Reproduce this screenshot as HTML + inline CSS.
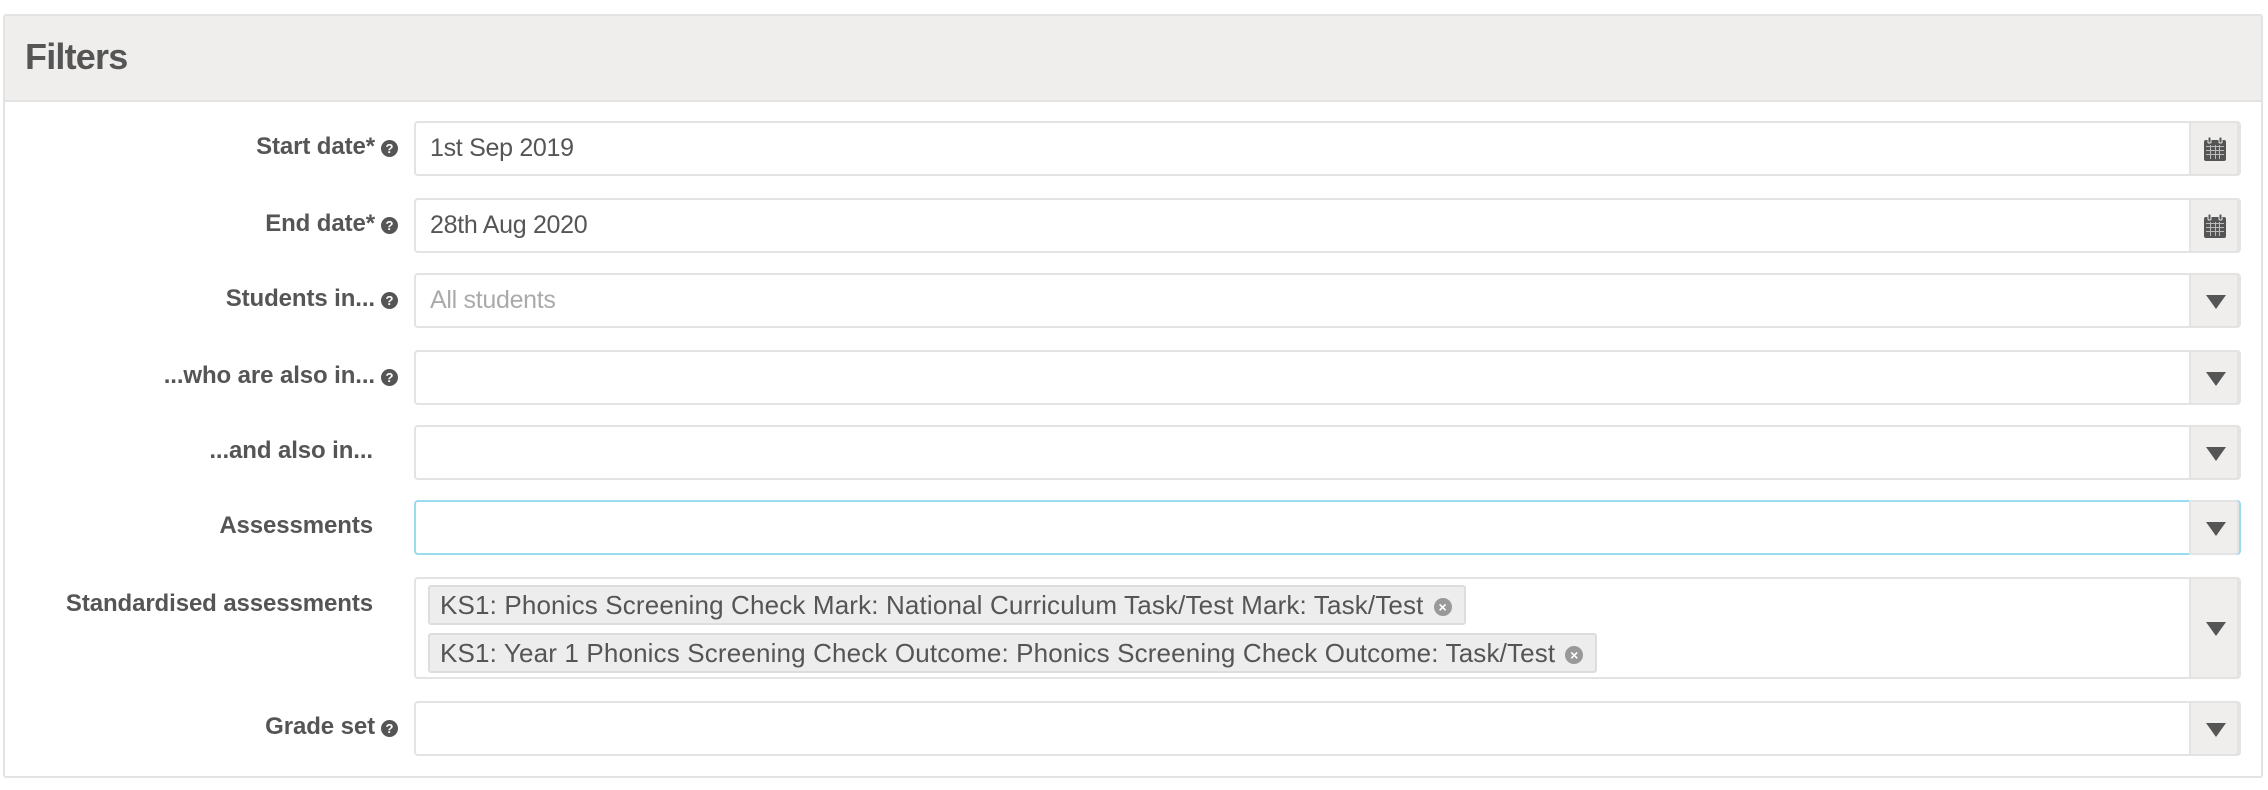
<!DOCTYPE html>
<html><head><meta charset="utf-8"><style>
*{box-sizing:border-box;margin:0;padding:0}
body{width:2268px;height:790px;background:#fff;font-family:"Liberation Sans",sans-serif;color:#555;position:relative;overflow:hidden}
.panel{position:absolute;left:3px;top:14px;width:2260px;height:764px;border:2px solid #e3e3e3;border-radius:3px}
.head{position:absolute;left:0;top:0;right:0;height:86px;background:#efeeed;border-bottom:2px solid #e3e3e3}
.head h1{position:absolute;left:20px;top:20px;font-size:36px;font-weight:bold;color:#555;letter-spacing:-0.8px}
.lab{position:absolute;right:1895px;font-size:24px;font-weight:bold;color:#555;text-align:right;white-space:nowrap;letter-spacing:-0.1px}
.q{display:inline-block;width:17px;height:17px;border-radius:50%;background:#555;color:#fff;font-size:13px;line-height:17px;text-align:center;margin-left:6px;vertical-align:1px;letter-spacing:0}
.inp{position:absolute;left:414px;width:1827px;height:55px;border:2px solid #e3e3e3;border-radius:4px;background:#fff;font-size:25px;color:#555;padding:11px 14px;letter-spacing:-0.3px}
.inp.focus{border-color:#9adcef}
.add{position:absolute;right:0;top:-2px;bottom:-2px;width:50px;background:#efeeed;border:2px solid #e3e3e3;border-radius:0 4px 4px 0}
.ph{color:#aaa}
.tri{position:absolute;left:15px;top:50%;margin-top:-6px;width:0;height:0;border-left:10px solid transparent;border-right:10px solid transparent;border-top:14px solid #555}
.tag{position:absolute;left:12px;height:40px;background:#eeeded;border:2px solid #ddd;border-radius:3px;font-size:26px;padding:3px 12px 3px 10px;white-space:nowrap;letter-spacing:0.15px}
.x{display:inline-block;width:18px;height:18px;border-radius:50%;background:#999;color:#fff;font-size:14px;line-height:18px;text-align:center;margin-left:10px;vertical-align:2px;font-weight:bold;letter-spacing:0}
</style></head><body>
<div class="panel"><div class="head"><h1>Filters</h1></div></div>

<div class="lab" style="top:133px;right:1870px">Start date*<span class="q">?</span></div>
<div class="inp" style="top:121px">1st Sep 2019<div class="add"><svg style="position:absolute;left:12px;top:13px" width="24" height="26" viewBox="0 0 24 26"><rect x="1" y="4" width="22" height="21" rx="2" fill="#555"/><rect x="5" y="1" width="3" height="6" rx="1" fill="#555" stroke="#efeeed"/><rect x="16" y="1" width="3" height="6" rx="1" fill="#555" stroke="#efeeed"/><g fill="#bbb"><rect x="3" y="10" width="18" height="1"/><rect x="3" y="14" width="18" height="1"/><rect x="3" y="18" width="18" height="1"/><rect x="7" y="9" width="1" height="14"/><rect x="12" y="9" width="1" height="14"/><rect x="16" y="9" width="1" height="14"/></g></svg></div></div>

<div class="lab" style="top:210px;right:1870px">End date*<span class="q">?</span></div>
<div class="inp" style="top:198px">28th Aug 2020<div class="add"><svg style="position:absolute;left:12px;top:13px" width="24" height="26" viewBox="0 0 24 26"><rect x="1" y="4" width="22" height="21" rx="2" fill="#555"/><rect x="5" y="1" width="3" height="6" rx="1" fill="#555" stroke="#efeeed"/><rect x="16" y="1" width="3" height="6" rx="1" fill="#555" stroke="#efeeed"/><g fill="#bbb"><rect x="3" y="10" width="18" height="1"/><rect x="3" y="14" width="18" height="1"/><rect x="3" y="18" width="18" height="1"/><rect x="7" y="9" width="1" height="14"/><rect x="12" y="9" width="1" height="14"/><rect x="16" y="9" width="1" height="14"/></g></svg></div></div>

<div class="lab" style="top:285px;right:1870px">Students in...<span class="q">?</span></div>
<div class="inp" style="top:273px"><span class="ph">All students</span><div class="add"><div class="tri"></div></div></div>

<div class="lab" style="top:362px;right:1870px">...who are also in...<span class="q">?</span></div>
<div class="inp" style="top:350px"><div class="add"><div class="tri"></div></div></div>

<div class="lab" style="top:437px">...and also in...</div>
<div class="inp" style="top:425px"><div class="add"><div class="tri"></div></div></div>

<div class="lab" style="top:512px">Assessments</div>
<div class="inp focus" style="top:500px"><div class="add"><div class="tri"></div></div></div>

<div class="lab" style="top:590px">Standardised assessments</div>
<div class="inp" style="top:577px;height:102px;padding:0">
<div class="tag" style="top:6px">KS1: Phonics Screening Check Mark: National Curriculum Task/Test Mark: Task/Test<span class="x">×</span></div>
<div class="tag" style="top:54px">KS1: Year 1 Phonics Screening Check Outcome: Phonics Screening Check Outcome: Task/Test<span class="x">×</span></div>
<div class="add"><div class="tri"></div></div></div>

<div class="lab" style="top:713px;right:1870px">Grade set<span class="q">?</span></div>
<div class="inp" style="top:701px"><div class="add"><div class="tri"></div></div></div>
</body></html>
